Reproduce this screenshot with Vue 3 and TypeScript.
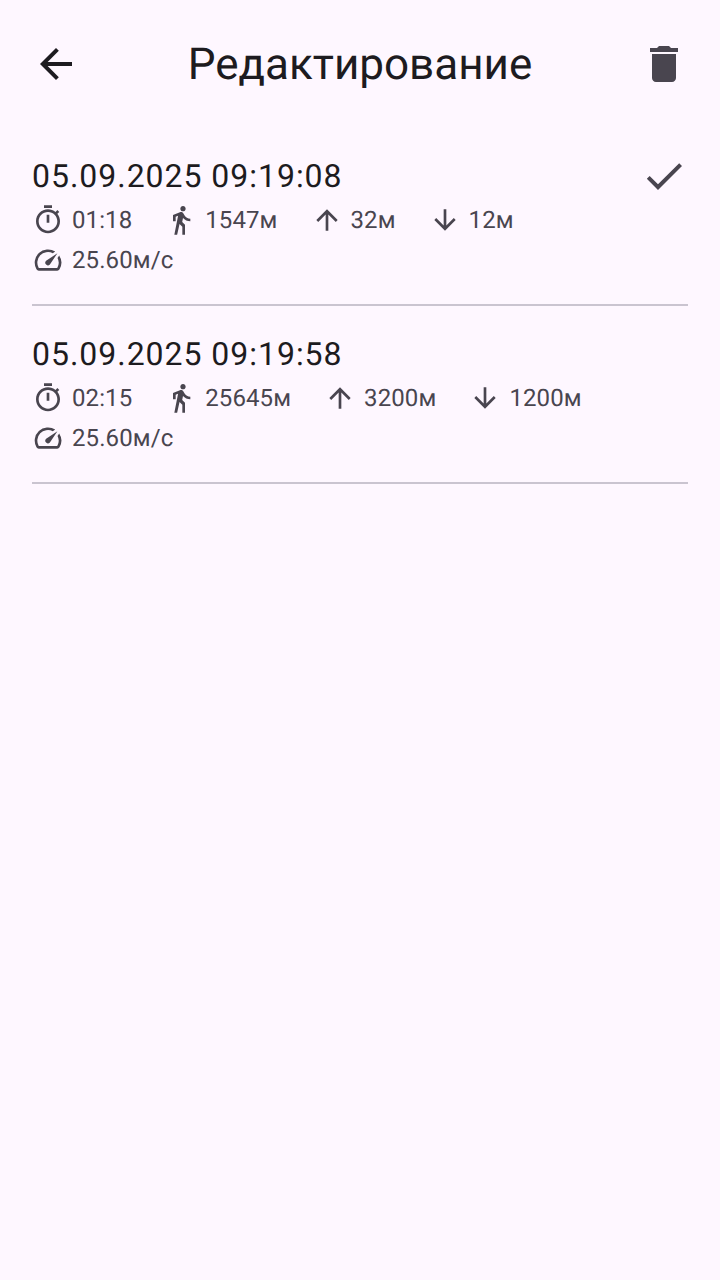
<script setup lang="ts">
type IconName = 'timer' | 'walk' | 'up' | 'down' | 'speed'

interface Metric {
  icon: IconName
  value: string
}

interface Track {
  title: string
  selected: boolean
  metrics: Metric[]
}

const paths: Record<IconName, string> = {
  timer:
    'M15 1H9v2h6V1zm-4 13h2V8h-2v6zm8.03-6.61 1.42-1.42c-.43-.51-.9-.99-1.41-1.41l-1.42 1.42C16.07 4.74 14.12 4 12 4c-4.97 0-9 4.03-9 9s4.02 9 9 9 9-4.03 9-9c0-2.12-.74-4.07-1.97-5.61zM12 20c-3.87 0-7-3.13-7-7s3.13-7 7-7 7 3.13 7 7-3.13 7-7 7z',
  walk:
    'M13.5 5.5c1.1 0 2-.9 2-2s-.9-2-2-2-2 .9-2 2 .9 2 2 2zM9.8 8.9 7 23h2.1l1.8-8 2.1 2v6h2v-7.5l-2.1-2 .6-3C14.8 12 16.8 13 19 13v-2c-1.9 0-3.5-1-4.3-2.4l-1-1.6c-.4-.6-1-1-1.7-1-.3 0-.5.1-.8.1L6 8.3v4.7h2V9.6l1.8-.7',
  up: 'M4 12l1.41 1.41L11 7.83V20h2V7.83l5.58 5.59L20 12l-8-8-8 8z',
  down: 'M20 12l-1.41-1.41L13 16.17V4h-2v12.17l-5.58-5.59L4 12l8 8 8-8z',
  speed:
    'M20.38 8.57l-1.23 1.85a8 8 0 0 1-.22 7.58H5.07A8 8 0 0 1 15.58 6.85l1.85-1.23A10 10 0 0 0 3.35 19a2 2 0 0 0 1.72 1h13.85a2 2 0 0 0 1.74-1 10 10 0 0 0-.27-10.44zm-9.79 6.84a2 2 0 0 0 2.83 0l5.66-8.49-8.49 5.66a2 2 0 0 0 0 2.83z',
}

const tracks: Track[] = [
  {
    title: '05.09.2025 09:19:08',
    selected: true,
    metrics: [
      { icon: 'timer', value: '01:18' },
      { icon: 'walk', value: '1547м' },
      { icon: 'up', value: '32м' },
      { icon: 'down', value: '12м' },
      { icon: 'speed', value: '25.60м/с' },
    ],
  },
  {
    title: '05.09.2025 09:19:58',
    selected: false,
    metrics: [
      { icon: 'timer', value: '02:15' },
      { icon: 'walk', value: '25645м' },
      { icon: 'up', value: '3200м' },
      { icon: 'down', value: '1200м' },
      { icon: 'speed', value: '25.60м/с' },
    ],
  },
]
</script>

<template>
  <main class="screen">
    <header class="bar">
      <button class="action" aria-label="Назад">
        <svg class="icon-large" viewBox="0 0 24 24"><path d="M20 11H7.83l5.59-5.59L12 4l-8 8 8 8 1.41-1.41L7.83 13H20v-2z" /></svg>
      </button>
      <h1 class="heading">Редактирование</h1>
      <button class="action muted" aria-label="Удалить">
        <svg class="icon-large" viewBox="0 0 24 24"><path d="M6 19c0 1.1.9 2 2 2h8c1.1 0 2-.9 2-2V7H6v12zM19 4h-3.5l-1-1h-5l-1 1H5v2h14V4z" /></svg>
      </button>
    </header>
    <ul class="list">
      <li v-for="track in tracks" :key="track.title" class="track">
        <div class="title-row">
          <span class="title">{{ track.title }}</span>
          <svg v-if="track.selected" class="icon-large check" viewBox="0 0 24 24"><path d="M9 16.17 4.83 12l-1.42 1.41L9 19 21 7l-1.41-1.41z" /></svg>
        </div>
        <div class="metrics">
          <span v-for="metric in track.metrics" :key="metric.icon" class="metric">
            <svg class="icon" viewBox="0 0 24 24"><path :d="paths[metric.icon]" /></svg>
            <span>{{ metric.value }}</span>
          </span>
        </div>
      </li>
    </ul>
  </main>
</template>

<style>
body { margin: 0; background: #fef7ff; }
</style>

<style scoped>
.screen { box-sizing: border-box; min-height: 1280px; background: #fef7ff; color: #1d1b20; font-family: Roboto, sans-serif; text-rendering: geometricPrecision; }
.bar { display: flex; align-items: center; height: 128px; padding: 0 8px; }
.action { display: flex; align-items: center; justify-content: center; width: 96px; height: 96px; padding: 0; border: 0; background: none; color: #1d1b20; }
.muted { color: #49454f; }
.heading { flex: 1; margin: 0; text-align: center; font-size: 44px; font-weight: 400; line-height: 56px; }
svg { display: block; flex: none; fill: currentColor; }
.icon-large { width: 48px; height: 48px; }
.list { margin: 0; padding: 0 32px; list-style: none; }
.track { box-sizing: border-box; height: 178px; padding-top: 24px; border-bottom: 2px solid #cac4d0; }
.title-row { display: flex; align-items: center; justify-content: space-between; height: 48px; }
.title { font-size: 32px; letter-spacing: 0.97px; line-height: 48px; }
.check { color: #49454f; }
.metrics { display: flex; flex-wrap: wrap; column-gap: 33px; row-gap: 8px; padding-top: 4px; color: #49454f; }
.metric { display: flex; align-items: center; gap: 8px; height: 32px; font-size: 24px; letter-spacing: 0.1px; line-height: 32px; }
.metric:nth-child(4) { margin-right: 56px; }
.icon { width: 32px; height: 32px; }
</style>
